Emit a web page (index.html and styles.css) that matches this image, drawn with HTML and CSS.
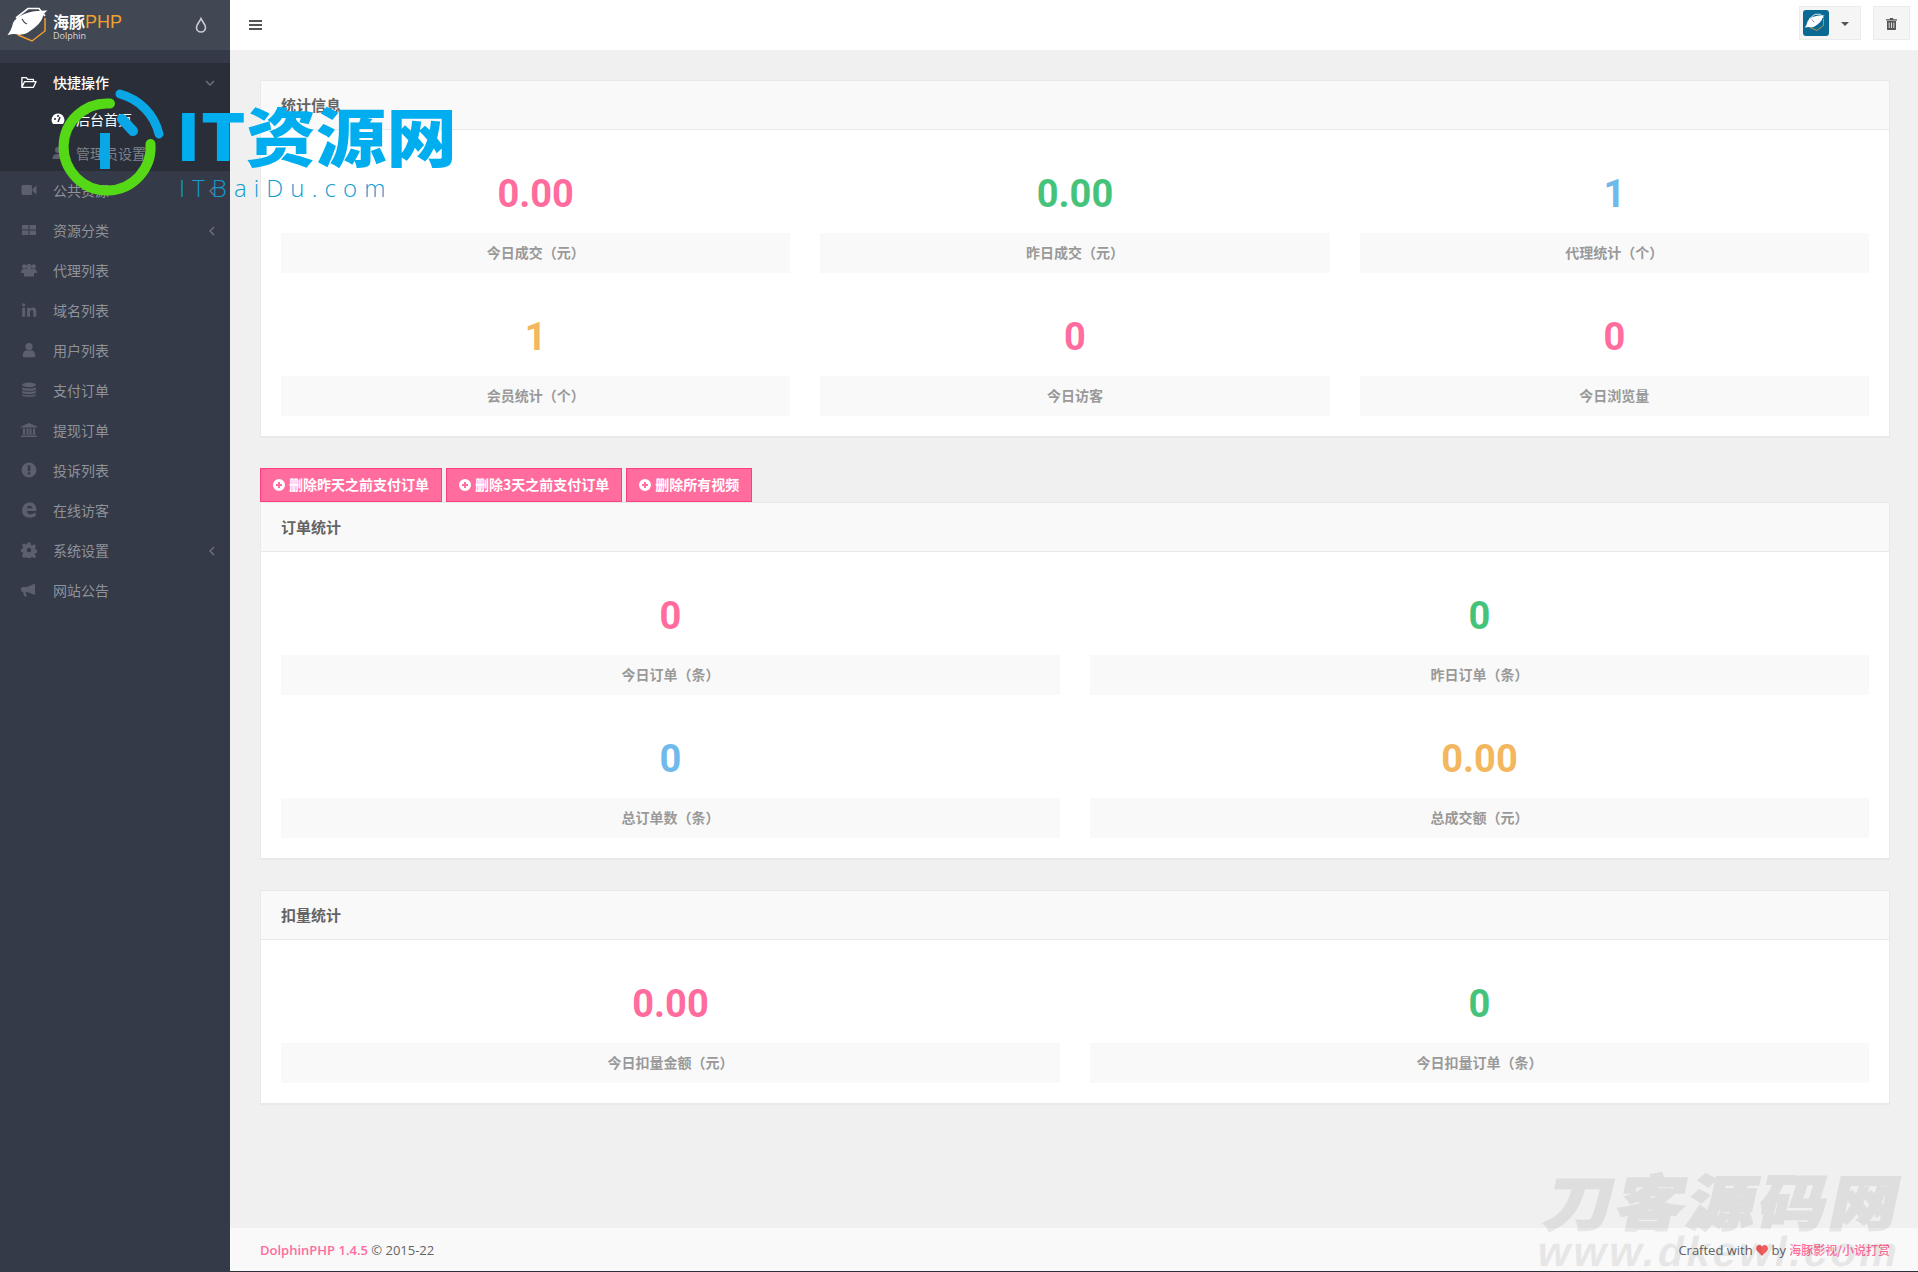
FILE: index.html
```html
<!DOCTYPE html>
<html lang="zh-CN">
<head>
    <meta charset="UTF-8">
    <title>DolphinPHP</title>
    <link rel="stylesheet" href="styles.css">
</head>
<body>
    <svg class="defs" width="0" height="0">
        <symbol id="dolphin" viewBox="0 0 48 44">
            <path d="M39 12 V25 L26 35 L12 29" fill="none" stroke="#f0a030" stroke-width="1.500"/>
            <path d="M10 12 L22 2.500 L33 2.500 L39 10" fill="none" stroke="#fff" stroke-width="1.600"/>
            <path d="M1.500 29 C4 26 6 22 7 17 C10 11 19 6 31 5 C34 5 38 4.500 41.500 4.500 C39 6 38 8 37 10 C36 15 31 21 21 27 C17 29 12 29 9 28 C6 28 4 28.500 1.500 29Z" fill="#fff"/>
            <path d="M16 13 C17 15 18 17 21 18" fill="none" stroke="#414753" stroke-width="1.200"/>
        </symbol>
    </svg>

    <aside class="sidebar">
        <div class="brand">
            <svg class="brand-logo"><use href="#dolphin"/></svg>
            <div class="brand-text">
                <div class="brand-name">海豚<span>PHP</span></div>
                <div class="brand-sub">Dolphin</div>
            </div>
            <svg class="brand-drop" viewBox="0 0 12 16"><path d="M6 1.500 C4.500 5 1.500 7.500 1.500 10.500 A4.500 4.500 0 0 0 10.500 10.500 C10.500 7.500 7.500 5 6 1.500Z" fill="none" stroke="#c9ccd2" stroke-width="1.600"/></svg>
        </div>

        <nav class="nav">
            <div class="nav-group">
                <a class="nav-item is-open">
                    <svg class="nav-icon" viewBox="0 0 18 14"><path d="M1 13V2h5l1.500 2H14v2.500M1 13l3-6.500h13l-3 6.500H1Z" fill="none" stroke="currentColor" stroke-width="1.500" stroke-linejoin="round"/></svg>
                    快捷操作
                    <svg class="nav-arrow" viewBox="0 0 10 10"><path d="M1 3l4 4 4-4" fill="none" stroke="currentColor" stroke-width="1.400"/></svg>
                </a>
                <a class="sub-item is-active">
                    <svg class="sub-icon" viewBox="0 0 14 14"><path d="M7 1.500A6.500 6.500 0 0 0 2 12h10A6.500 6.500 0 0 0 7 1.500Z" fill="currentColor"/><path d="M7 10 9 5" stroke="#2a2e39" stroke-width="1.500"/><circle cx="4" cy="7" r="1" fill="#2a2e39"/><circle cx="7" cy="4" r="1" fill="#2a2e39"/></svg>
                    后台首页
                </a>
                <a class="sub-item">
                    <svg class="sub-icon" viewBox="0 0 14 14"><circle cx="7" cy="4" r="3" fill="currentColor"/><path d="M1.500 13c0-4 2-5 5.500-5s5.500 1 5.500 5Z" fill="currentColor"/></svg>
                    管理员设置
                </a>
            </div>

            <a class="nav-item">
                <svg class="nav-icon" viewBox="0 0 16 12"><rect x="0.500" y="1" width="10.500" height="10" rx="1.500" fill="currentColor"/><path d="M11.500 5 15.500 1.500V10.500L11.500 7Z" fill="currentColor"/></svg>
                公共资源
                <svg class="nav-arrow" viewBox="0 0 10 10"><path d="M7 1 3 5l4 4" fill="none" stroke="currentColor" stroke-width="1.400"/></svg>
            </a>
            <a class="nav-item">
                <svg class="nav-icon" viewBox="0 0 16 12"><path d="M1 1h6.500v4.500H1ZM8.500 1H15v4.500H8.500ZM1 6.500h6.500V11H1ZM8.500 6.500H15V11H8.500Z" fill="currentColor"/></svg>
                资源分类
                <svg class="nav-arrow" viewBox="0 0 10 10"><path d="M7 1 3 5l4 4" fill="none" stroke="currentColor" stroke-width="1.400"/></svg>
            </a>
            <a class="nav-item">
                <svg class="nav-icon" viewBox="0 0 16 14"><circle cx="3.200" cy="3.500" r="2.200" fill="currentColor"/><circle cx="12.800" cy="3.500" r="2.200" fill="currentColor"/><circle cx="8" cy="3.800" r="2.800" fill="currentColor"/><path d="M0 10c0-3 1-4 3-4h10c2 0 3 1 3 4h-3v3.500H3V10Z" fill="currentColor"/></svg>
                代理列表
            </a>
            <a class="nav-item">
                <svg class="nav-icon" viewBox="0 0 14 14"><path d="M1 5h2.600v8H1ZM2.300 1a1.400 1.400 0 1 1 0 2.900 1.400 1.400 0 0 1 0-2.900ZM5.300 5h2.500v1.100C8.300 5.300 9.300 4.800 10.400 4.800 12.400 4.800 13.400 6 13.400 8.300V13h-2.600V8.700C10.800 7.500 10.300 7 9.500 7 8.500 7 7.900 7.700 7.900 8.800V13H5.300Z" fill="currentColor"/></svg>
                域名列表
            </a>
            <a class="nav-item">
                <svg class="nav-icon" viewBox="0 0 14 14"><circle cx="7" cy="4" r="3.200" fill="currentColor"/><path d="M1.500 13c0-4 1.500-5.500 3-5.500h5c1.500 0 3 1.500 3 5.500-1 .7-10 .7-11 0Z" fill="currentColor"/></svg>
                用户列表
            </a>
            <a class="nav-item">
                <svg class="nav-icon" viewBox="0 0 14 14"><ellipse cx="7" cy="2.500" rx="6" ry="2" fill="currentColor"/><path d="M1 4.500c1 1.500 11 1.500 12 0v2c-1 1.500-11 1.500-12 0ZM1 7.500c1 1.500 11 1.500 12 0v2c-1 1.500-11 1.500-12 0ZM1 10.500c1 1.500 11 1.500 12 0v1c-1 2-11 2-12 0Z" fill="currentColor"/></svg>
                支付订单
            </a>
            <a class="nav-item">
                <svg class="nav-icon" viewBox="0 0 16 14"><path d="M8 0 16 3.500V4.500H0V3.500ZM2 5.500h2V11H2ZM5.500 5.500h2V11h-2ZM8.500 5.500h2V11h-2ZM12 5.500h2V11h-2ZM1 11.500H15V12.500H1ZM0 13H16V14H0Z" fill="currentColor"/></svg>
                提现订单
            </a>
            <a class="nav-item">
                <svg class="nav-icon" viewBox="0 0 14 14"><path fill-rule="evenodd" d="M7 .500a6.500 6.500 0 1 0 0 13 6.500 6.500 0 0 0 0-13ZM5.800 3h2.400L8 8H6ZM5.900 9h2.200v2H5.900Z" fill="currentColor"/></svg>
                投诉列表
            </a>
            <a class="nav-item">
                <svg class="nav-icon" viewBox="0 0 14 14"><path fill-rule="evenodd" d="M1 8C1 3 4 .500 8 .500 11.500.500 13.500 3 13.500 7.800H5C5.200 9.800 6.500 10.800 8.200 10.800 9.800 10.800 11 10.200 12.800 9V12.300C11 13.300 9.700 13.600 8 13.600 4 13.600 1 11.500 1 8ZM5 5.500H10C9.800 4 9 3.200 7.500 3.200 6.200 3.200 5.200 4 5 5.500Z" fill="currentColor"/></svg>
                在线访客
            </a>
            <a class="nav-item">
                <svg class="nav-icon" viewBox="0 0 14 14"><path fill-rule="evenodd" d="M5.800.500h2.400l.4 2 1.200.5 1.700-1.100 1.700 1.700-1.100 1.700.5 1.200 2 .4v2.400l-2 .4-.5 1.200 1.100 1.700-1.700 1.700-1.700-1.100-1.200.5-.4 2H5.800l-.4-2-1.200-.5-1.700 1.100L.8 11.900l1.100-1.700-.5-1.200-2-.4V6.200l2-.4.5-1.200L.8 2.900 2.500 1.200 4.200 2.300 5.400 1.800ZM7 5a2 2 0 1 0 0 4 2 2 0 0 0 0-4Z" fill="currentColor"/></svg>
                系统设置
                <svg class="nav-arrow" viewBox="0 0 10 10"><path d="M7 1 3 5l4 4" fill="none" stroke="currentColor" stroke-width="1.400"/></svg>
            </a>
            <a class="nav-item">
                <svg class="nav-icon" viewBox="0 0 16 14"><path d="M14 .500V12L6 9H4.500L6 13.500H3.500L2 9C.500 9 0 8 0 6.500S.500 4 2 4H6Z" fill="currentColor"/></svg>
                网站公告
            </a>
        </nav>
    </aside>

    <div class="page">
        <header class="topbar">
            <svg class="menu-icon" viewBox="0 0 13 10"><path d="M0 0h13v2H0ZM0 4h13v2H0ZM0 8h13v2H0Z" fill="#555"/></svg>
            <div class="top-actions">
                <button class="top-btn user-btn">
                    <span class="avatar"><svg><use href="#dolphin"/></svg></span>
                    <span class="caret"></span>
                </button>
                <button class="top-btn trash-btn">
                    <svg viewBox="0 0 11 12"><path d="M4 0h3l.5 1.300H11v1.200H0V1.300h3.500ZM1 3h9v8c0 .6-.4 1-1 1H2c-.6 0-1-.4-1-1Z" fill="#555"/><path d="M3.200 4.500v5.500M5.500 4.500v5.500M7.800 4.500v5.500" stroke="#eee" stroke-width=".9"/></svg>
                </button>
            </div>
        </header>

        <main class="content">
            <section class="card">
                <h3 class="card-title">统计信息</h3>
                <div class="stats stats-3">
                    <div class="stat"><div class="stat-value pink">0.00</div><div class="stat-label">今日成交（元）</div></div>
                    <div class="stat"><div class="stat-value green">0.00</div><div class="stat-label">昨日成交（元）</div></div>
                    <div class="stat"><div class="stat-value blue">1</div><div class="stat-label">代理统计（个）</div></div>
                    <div class="stat"><div class="stat-value orange">1</div><div class="stat-label">会员统计（个）</div></div>
                    <div class="stat"><div class="stat-value pink">0</div><div class="stat-label">今日访客</div></div>
                    <div class="stat"><div class="stat-value pink">0</div><div class="stat-label">今日浏览量</div></div>
                </div>
            </section>

            <div class="actions">
                <button class="btn-del"><svg viewBox="0 0 12 12"><path fill-rule="evenodd" d="M6 0a6 6 0 1 0 0 12A6 6 0 0 0 6 0ZM5 3h2v2h2v2H7v2H5V7H3V5h2Z" fill="#fff"/></svg>删除昨天之前支付订单</button>
                <button class="btn-del"><svg viewBox="0 0 12 12"><path fill-rule="evenodd" d="M6 0a6 6 0 1 0 0 12A6 6 0 0 0 6 0ZM5 3h2v2h2v2H7v2H5V7H3V5h2Z" fill="#fff"/></svg>删除3天之前支付订单</button>
                <button class="btn-del"><svg viewBox="0 0 12 12"><path fill-rule="evenodd" d="M6 0a6 6 0 1 0 0 12A6 6 0 0 0 6 0ZM5 3h2v2h2v2H7v2H5V7H3V5h2Z" fill="#fff"/></svg>删除所有视频</button>
            </div>

            <section class="card">
                <h3 class="card-title">订单统计</h3>
                <div class="stats stats-2">
                    <div class="stat"><div class="stat-value pink">0</div><div class="stat-label">今日订单（条）</div></div>
                    <div class="stat"><div class="stat-value green">0</div><div class="stat-label">昨日订单（条）</div></div>
                    <div class="stat"><div class="stat-value blue">0</div><div class="stat-label">总订单数（条）</div></div>
                    <div class="stat"><div class="stat-value orange">0.00</div><div class="stat-label">总成交额（元）</div></div>
                </div>
            </section>

            <section class="card">
                <h3 class="card-title">扣量统计</h3>
                <div class="stats stats-2">
                    <div class="stat"><div class="stat-value pink">0.00</div><div class="stat-label">今日扣量金额（元）</div></div>
                    <div class="stat"><div class="stat-value green">0</div><div class="stat-label">今日扣量订单（条）</div></div>
                </div>
            </section>
        </main>

        <footer class="footer">
            <div><a class="pink-link">DolphinPHP 1.4.5</a> © 2015-22</div>
            <div>Crafted with <svg class="heart" viewBox="0 0 12 11"><path d="M6 11 1 5.800C-1 3.200.800 0 3.300 0 4.500 0 5.500.700 6 1.600 6.500.700 7.500 0 8.700 0 11.200 0 13 3.200 11 5.800Z" fill="#f25c5c"/></svg> by <a class="pink-link cn">海豚影视/小说打赏</a></div>
        </footer>
    </div>

    <!-- watermarks sit over the page -->
    <div class="wm-it">
        <svg class="wm-ring" viewBox="0 0 130 130">
            <path d="M60 23.500 A43.500 43.500 0 1 0 100.500 64" fill="none" stroke="#55d816" stroke-width="10" stroke-linecap="round"/>
            <path d="M70 14 A54.500 54.500 0 0 1 109 54" fill="none" stroke="#0aa7e6" stroke-width="9" stroke-linecap="round"/>
            <path d="M72 39 L83 51" stroke="#0aa7e6" stroke-width="10" stroke-linecap="round"/>
            <rect x="50" y="53" width="10" height="36" fill="#0aa7e6"/>
        </svg>
        <div class="wm-title">IT资源网</div>
        <div class="wm-sub">ITBaiDu.com</div>
    </div>
    <div class="wm-dk">
        <div class="wm-dk-cn">刀客源码网</div>
        <div class="wm-dk-en">www.dkewl.com</div>
    </div>
</body>
</html>
```

FILE: styles.css
```css
* {
    box-sizing: border-box;
}

body {
    margin: 0;
    height: 1272px;
    display: flex;
    overflow: hidden;
    position: relative;
    background: #2c3038;
    color: #646464;
    font-family: "Open Sans", "Noto Sans CJK SC", sans-serif;
    font-size: 13px;
}

.defs {
    position: absolute;
}

.sidebar {
    width: 230px;
    flex: none;
    background: #343a47;
}

.brand {
    height: 50px;
    display: flex;
    align-items: center;
    padding: 0 0 0 6px;
    background: #414753;
}

.brand-logo {
    width: 48px;
    height: 44px;
    margin-top: 6px;
    margin-right: -1px;
}

.brand-text {
    color: #fff;
    width: 142px;
    padding-top: 1px;
}

.brand-name {
    font-size: 16px;
    line-height: 18px;
    font-weight: 700;
    font-family: "Noto Sans CJK SC", sans-serif;
}

.brand-name span {
    color: #f0a030;
    font-family: "Liberation Sans", sans-serif;
    font-weight: 400;
    font-size: 18px;
}

.brand-sub {
    font-size: 9px;
    line-height: 9px;
    color: #d8dade;
}

.brand-drop {
    width: 12px;
    height: 16px;
}

.nav {
    padding-top: 13px;
    font-family: "Noto Sans CJK SC", sans-serif;
    font-size: 14px;
}

.nav-group {
    background: #2a2e39;
    height: 108px;
}

.nav-item {
    height: 40px;
    display: flex;
    align-items: center;
    position: relative;
    padding: 0 0 2px 53px;
    color: #8f929a;
}

.nav-item.is-open {
    color: #fff;
    font-weight: 500;
}

.nav-icon {
    position: absolute;
    left: 21px;
    top: 11px;
    width: 16px;
    height: 16px;
    color: #5b606c;
}

.is-open .nav-icon {
    color: #fff;
}

.nav-arrow {
    position: absolute;
    right: 13px;
    top: 15px;
    width: 10px;
    height: 10px;
    color: #6f737d;
}

.is-open .nav-arrow {
    right: 15px;
}

.sub-item {
    height: 34px;
    display: flex;
    align-items: center;
    position: relative;
    padding: 0 0 2px 76px;
    color: #7e8189;
}

.sub-item.is-active {
    color: #fff;
}

.sub-icon {
    position: absolute;
    left: 51px;
    top: 9px;
    width: 14px;
    height: 14px;
    color: #5b606c;
}

.is-active .sub-icon {
    color: #fff;
}

.page {
    flex: 1;
    display: flex;
    flex-direction: column;
    background: #f0f0f0;
    margin-bottom: 1px;
}

.topbar {
    height: 50px;
    flex: none;
    background: #fff;
    display: flex;
    align-items: center;
    justify-content: space-between;
    padding: 0 8px 4px 19px;
}

.menu-icon {
    width: 13px;
    height: 10px;
    margin-top: 4px;
}

.top-actions {
    display: flex;
    gap: 12px;
}

.top-btn {
    height: 34px;
    padding: 0;
    background: #f5f5f5;
    border: 1px solid #ececec;
    display: flex;
    align-items: center;
}

.user-btn {
    width: 62px;
    padding-left: 3px;
}

.avatar {
    width: 26px;
    height: 26px;
    border-radius: 3px;
    background: #0a6a94;
    display: flex;
    align-items: center;
    justify-content: center;
}

.avatar svg {
    width: 24px;
    height: 22px;
    margin-top: 1px;
}

.caret {
    width: 0;
    height: 0;
    margin: 1px 0 0 12px;
    border: 4px solid transparent;
    border-top-color: #555;
    border-bottom: 0;
}

.trash-btn {
    width: 37px;
    justify-content: center;
}

.trash-btn svg {
    width: 11px;
    height: 12px;
    margin-top: 1px;
}

.content {
    flex: 1;
    padding: 30px 28px 0 30px;
}

.card {
    background: #fff;
    border: 1px solid #e9e9e9;
    border-width: 1px 1px 2px;
    margin-bottom: 30px;
}

.card-title {
    height: 49px;
    margin: 0;
    padding: 0 20px 2px;
    display: flex;
    align-items: center;
    background: #f9f9f9;
    border-bottom: 1px solid #e9e9e9;
    font-family: "Noto Sans CJK SC", sans-serif;
    font-size: 15px;
    font-weight: 700;
    color: #646464;
}

.stats {
    display: grid;
    gap: 0 30px;
    padding: 0 20px 20px;
}

.stats-3 {
    grid-template-columns: repeat(3, 1fr);
}

.stats-2 {
    grid-template-columns: repeat(2, 1fr);
}

.stat-value {
    height: 103px;
    padding-top: 42px;
    line-height: 44px;
    text-align: center;
    font-family: Roboto, sans-serif;
    font-size: 38px;
    font-weight: 700;
}

.stat-label {
    height: 40px;
    line-height: 39px;
    text-align: center;
    background: #f9f9f9;
    color: #999;
    font-family: "Noto Sans CJK SC", sans-serif;
    font-size: 14px;
    font-weight: 700;
}

.pink { color: #ff6c9d; }
.green { color: #46c37b; }
.blue { color: #70b9eb; }
.orange { color: #f3b760; }

.actions {
    display: flex;
    gap: 4px;
}

.btn-del {
    height: 34px;
    padding: 0 12px 2px 12px;
    display: flex;
    align-items: center;
    gap: 4px;
    background: #ff6c9d;
    border: 1px solid #ff3d7f;
    color: #fff;
    font-family: "Noto Sans CJK SC", sans-serif;
    font-size: 14px;
    font-weight: 700;
}

.btn-del svg {
    width: 12px;
    height: 12px;
    margin-top: 2px;
}

.footer {
    height: 43px;
    flex: none;
    background: #f9f9f9;
    display: flex;
    align-items: center;
    justify-content: space-between;
    padding: 0 28px 0 30px;
}

.pink-link {
    color: #ff6c9d;
    font-weight: 600;
}

.pink-link.cn {
    font-family: "Noto Sans CJK SC", sans-serif;
    font-size: 12px;
    font-weight: 500;
}

.heart {
    width: 12px;
    height: 11px;
    vertical-align: -1px;
}

.wm-it {
    position: absolute;
    left: 0;
    top: 0;
    pointer-events: none;
}

.wm-ring {
    position: absolute;
    left: 50px;
    top: 80px;
    width: 130px;
    height: 130px;
}

.wm-title {
    position: absolute;
    left: 176px;
    top: 87px;
    line-height: 92px;
    white-space: nowrap;
    font-family: "Noto Sans CJK SC", sans-serif;
    font-size: 64px;
    font-weight: 900;
    color: #00aeef;
    transform: scaleX(1.1);
    transform-origin: left center;
}

.wm-sub {
    position: absolute;
    left: 179px;
    top: 172px;
    white-space: nowrap;
    font-family: "Open Sans", sans-serif;
    font-size: 24px;
    font-weight: 300;
    line-height: 32px;
    letter-spacing: 7.100px;
    color: #149cd0;
}

.wm-dk {
    position: absolute;
    left: 1544px;
    top: 1164px;
    pointer-events: none;
    color: #000;
    opacity: 0.07;
    transform: skewX(-12deg);
    white-space: nowrap;
}

.wm-dk-cn {
    font-family: "Noto Sans CJK SC", sans-serif;
    font-size: 60px;
    line-height: 70px;
    font-weight: 900;
    letter-spacing: 3px;
    -webkit-text-stroke: 2px #000;
    transform: scaleX(1.13);
    transform-origin: left center;
}

.wm-dk-en {
    margin-left: 2px;
    margin-top: 2px;
    font-family: "Liberation Sans", sans-serif;
    font-size: 42px;
    line-height: 32px;
    font-weight: 700;
    letter-spacing: 3px;
}
```
